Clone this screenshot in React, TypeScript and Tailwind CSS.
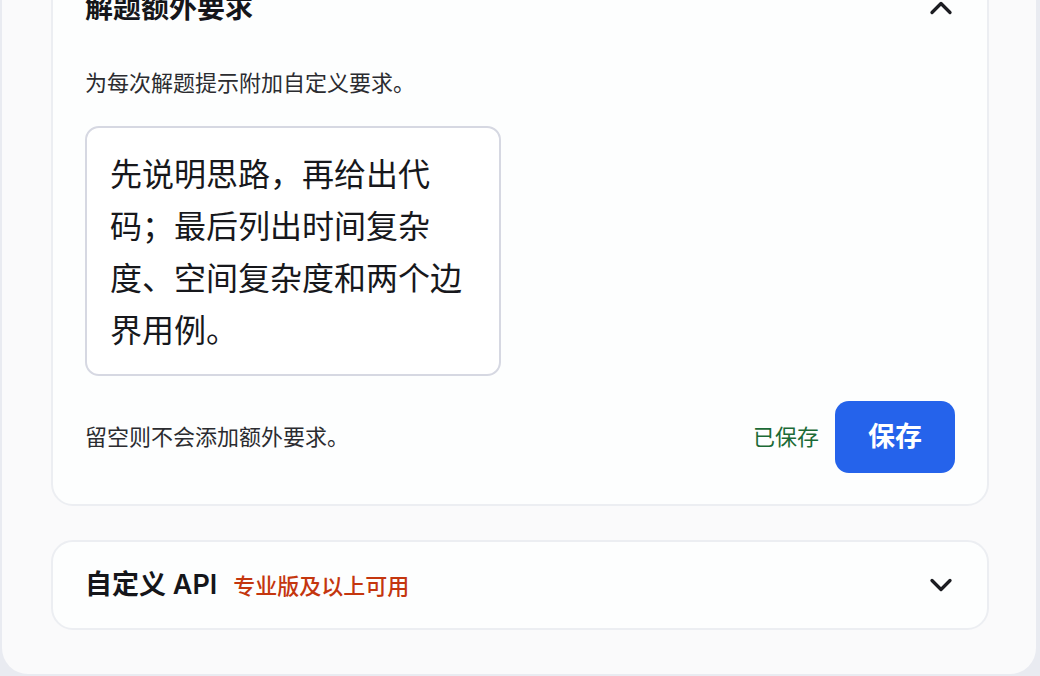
import { ChevronDown, ChevronUp } from "lucide-react";

const font = "font-['Inter','Noto_Sans_CJK_SC',sans-serif]";

const PromptCard = () => (
  <section className="-mt-[44px] rounded-[22px] border-2 border-[#eceef2] bg-[#fdfefe] px-[32px] pt-[32px] pb-[31px]">
    <div className="flex h-[36px] items-center justify-between">
      <h2 className="text-[28px] font-semibold leading-[36px] text-[#15161a]">解题额外要求</h2>
      <ChevronUp size={36} strokeWidth={2.2} className="mr-[-4px] text-[#1c1d22]" />
    </div>
    <p className="mt-[42px] text-[22px] leading-[30px] text-[#2b2c30]">为每次解题提示附加自定义要求。</p>
    <textarea
      className="mt-[28px] block h-[250px] w-[416px] resize-none rounded-[14px] border-2 border-[#d6d8e2] bg-white px-[23px] pt-[21px] text-[32px] leading-[52px] text-[#17181c] outline-none"
      defaultValue="先说明思路，再给出代码；最后列出时间复杂度、空间复杂度和两个边界用例。"
    />
    <div className="mt-[25px] flex items-center justify-between">
      <span className="text-[22px] leading-[30px] text-[#2b2c30]">留空则不会添加额外要求。</span>
      <div className="flex items-center gap-[16px]">
        <span className="text-[22px] leading-[30px] text-[#1b6a36]">已保存</span>
        <button className="h-[72px] w-[120px] rounded-[14px] bg-[#2563eb] text-[27px] font-semibold text-white">
          保存
        </button>
      </div>
    </div>
  </section>
);

const ApiCard = () => (
  <section className="mt-[34px] flex h-[90px] shrink-0 items-center justify-between rounded-[22px] border-2 border-[#eceef2] bg-[#fdfefe] px-[32px]">
    <div className="flex items-baseline gap-[16px]">
      <h2 className="text-[27px] font-semibold leading-[36px] text-[#15161a]">自定义 API</h2>
      <span className="text-[22px] font-medium text-[#c4360e]">专业版及以上可用</span>
    </div>
    <ChevronDown size={36} strokeWidth={2.2} className="mr-[-4px] text-[#1c1d22]" />
  </section>
);

export default function App() {
  return (
    <div className={`${font} h-[676px] w-[1040px] overflow-hidden bg-[#e9ebf1] pl-[2px] pr-[4px] pb-[2px]`}>
      <div className="flex h-full flex-col rounded-b-[26px] bg-[#fafafb] pl-[49px] pr-[47px]">
        <PromptCard />
        <ApiCard />
      </div>
    </div>
  );
}
